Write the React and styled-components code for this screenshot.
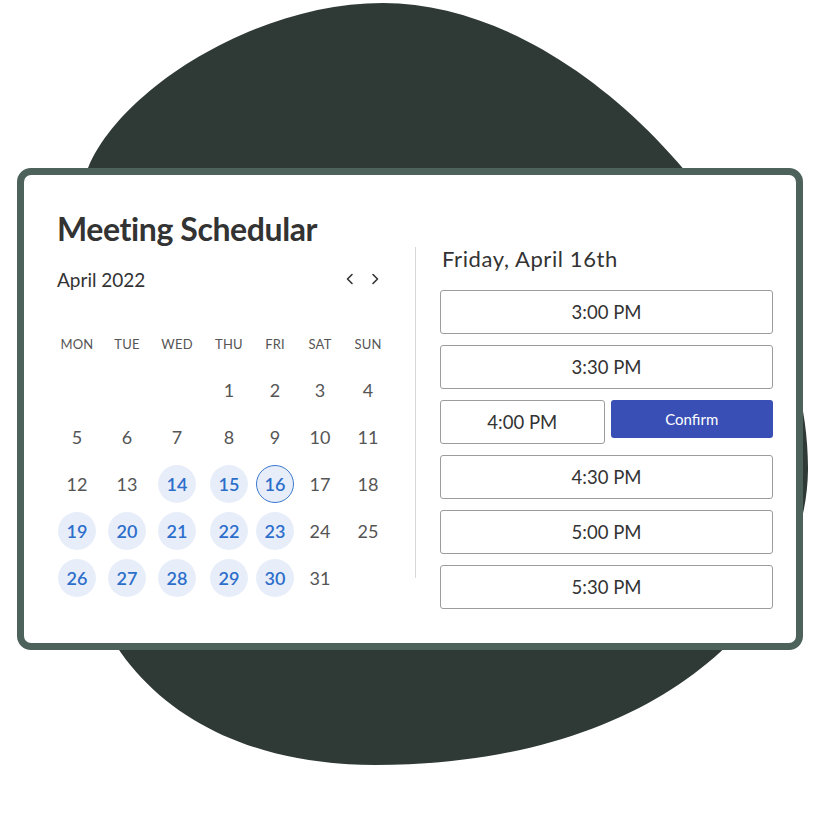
import React from 'react';
import styled, { createGlobalStyle } from 'styled-components';

const GlobalStyle = createGlobalStyle`
  body {
    margin: 0;
    background: #ffffff;
    font-family: Lato, "Noto Sans", sans-serif;
  }
`;

const COLUMNS = '50px 50px 50px 54px 38px 52px 44px';

const Page = styled.div`
  position: relative;
  width: 820px;
  height: 820px;
  overflow: hidden;
`;

const Blob = styled.svg`
  position: absolute;
  top: 0;
  left: 0;
  z-index: 0;
`;

const Card = styled.div`
  position: relative;
  z-index: 1;
  box-sizing: border-box;
  margin: 168px 0 0 17px;
  width: 786px;
  height: 482px;
  padding: 35px 23px 0 33px;
  background: #ffffff;
  border: 7px solid #4e625c;
  border-radius: 14px;
`;

const Title = styled.h1`
  margin: 0;
  font-size: 32px;
  line-height: 37px;
  font-weight: 700;
  letter-spacing: -0.4px;
  color: #333333;
`;

const Body = styled.div`
  display: flex;
  align-items: flex-start;
`;

const CalendarPanel = styled.div`
  flex: none;
  width: 336px;
`;

const MonthRow = styled.div`
  display: flex;
  align-items: center;
  justify-content: space-between;
  margin-top: 20px;
  padding-right: 14px;
  height: 24px;
`;

const MonthLabel = styled.span`
  font-size: 19px;
  color: #333333;
`;

const NavButtons = styled.div`
  display: flex;
  gap: 17px;
  color: #333333;
`;

const WeekHeader = styled.div`
  display: grid;
  grid-template-columns: ${COLUMNS};
  justify-items: center;
  margin: 45px 0 0 -5px;
  font-size: 13px;
  line-height: 16px;
  color: #555555;
  letter-spacing: 0.2px;
`;

const DayGrid = styled.div`
  display: grid;
  grid-template-columns: ${COLUMNS};
  grid-auto-rows: 47px;
  align-items: center;
  justify-items: center;
  margin: 14px 0 0 -5px;
`;

const Day = styled.div`
  box-sizing: border-box;
  width: 38px;
  height: 38px;
  border-radius: 50%;
  display: flex;
  align-items: center;
  justify-content: center;
  font-size: 18px;
  color: ${(p) => (p.$available ? '#2d6ecb' : '#555555')};
  font-weight: ${(p) => (p.$available ? 600 : 400)};
  background: ${(p) => (p.$available ? '#e8eef9' : 'transparent')};
  border: 1px solid ${(p) => (p.$selected ? '#3a77cf' : 'transparent')};
`;

const Divider = styled.div`
  flex: none;
  width: 1px;
  height: 331px;
  margin-left: 22px;
  background: #d8d8d8;
`;

const SlotsPanel = styled.div`
  flex: 1;
  margin-left: 24px;
`;

const DayTitle = styled.h2`
  margin: 0 0 0 2px;
  font-size: 22px;
  line-height: 24px;
  font-weight: 400;
  letter-spacing: 0.6px;
  color: #333333;
`;

const SlotList = styled.div`
  display: flex;
  flex-direction: column;
  gap: 11px;
  margin-top: 19px;
`;

const SlotRow = styled.div`
  display: flex;
  gap: 6px;
  align-items: flex-start;
`;

const Slot = styled.div`
  box-sizing: border-box;
  flex: ${(p) => (p.$half ? '1 1 0' : 'none')};
  min-width: 0;
  height: 44px;
  display: flex;
  align-items: center;
  justify-content: center;
  border: 1px solid #9c9c9c;
  border-radius: 3px;
  font-size: 18.5px;
  color: #333333;
`;

const ConfirmButton = styled.button`
  box-sizing: border-box;
  flex: 1 1 0;
  min-width: 0;
  height: 38px;
  padding: 0;
  border: none;
  border-radius: 3px;
  background: #3a4fb5;
  color: #ffffff;
  font-family: inherit;
  font-size: 15px;
  cursor: pointer;
`;

const Chevron = ({ dir }) => (
  <svg width="8" height="12" viewBox="0 0 8 12" fill="none" stroke="currentColor" strokeWidth="1.6" strokeLinecap="round" strokeLinejoin="round">
    {dir === 'left' ? <path d="M6 1.5 1.5 6 6 10.5" /> : <path d="M2 1.5 6.5 6 2 10.5" />}
  </svg>
);

const weekdays = ['MON', 'TUE', 'WED', 'THU', 'FRI', 'SAT', 'SUN'];
const available = [14, 15, 16, 19, 20, 21, 22, 23, 26, 27, 28, 29, 30];
const selectedDay = 16;
const slots = ['3:00 PM', '3:30 PM', '4:00 PM', '4:30 PM', '5:00 PM', '5:30 PM'];
const pendingSlot = '4:00 PM';

export default function App() {
  const cells = [null, null, null, ...Array.from({ length: 31 }, (_, i) => i + 1)];

  return (
    <Page>
      <GlobalStyle />
      <Blob width="820" height="820" viewBox="0 0 820 820">
        <path
          fill="#2f3a37"
          d="M383 3 C590 3 810 260 808 470 C806 620 650 765 375 765 C220 765 110 690 80 560 C40 460 30 330 88 168 C120 90 255 3 383 3 Z"
        />
      </Blob>
      <Card>
        <Title>Meeting Schedular</Title>
        <Body>
          <CalendarPanel>
            <MonthRow>
              <MonthLabel>April 2022</MonthLabel>
              <NavButtons>
                <Chevron dir="left" />
                <Chevron dir="right" />
              </NavButtons>
            </MonthRow>
            <WeekHeader>
              {weekdays.map((d) => (
                <span key={d}>{d}</span>
              ))}
            </WeekHeader>
            <DayGrid>
              {cells.map((day, i) =>
                day ? (
                  <Day key={i} $available={available.includes(day)} $selected={day === selectedDay}>
                    {day}
                  </Day>
                ) : (
                  <span key={i} />
                )
              )}
            </DayGrid>
          </CalendarPanel>
          <Divider />
          <SlotsPanel>
            <DayTitle>Friday, April 16th</DayTitle>
            <SlotList>
              {slots.map((s) =>
                s === pendingSlot ? (
                  <SlotRow key={s}>
                    <Slot $half>{s}</Slot>
                    <ConfirmButton>Confirm</ConfirmButton>
                  </SlotRow>
                ) : (
                  <Slot key={s}>{s}</Slot>
                )
              )}
            </SlotList>
          </SlotsPanel>
        </Body>
      </Card>
    </Page>
  );
}
